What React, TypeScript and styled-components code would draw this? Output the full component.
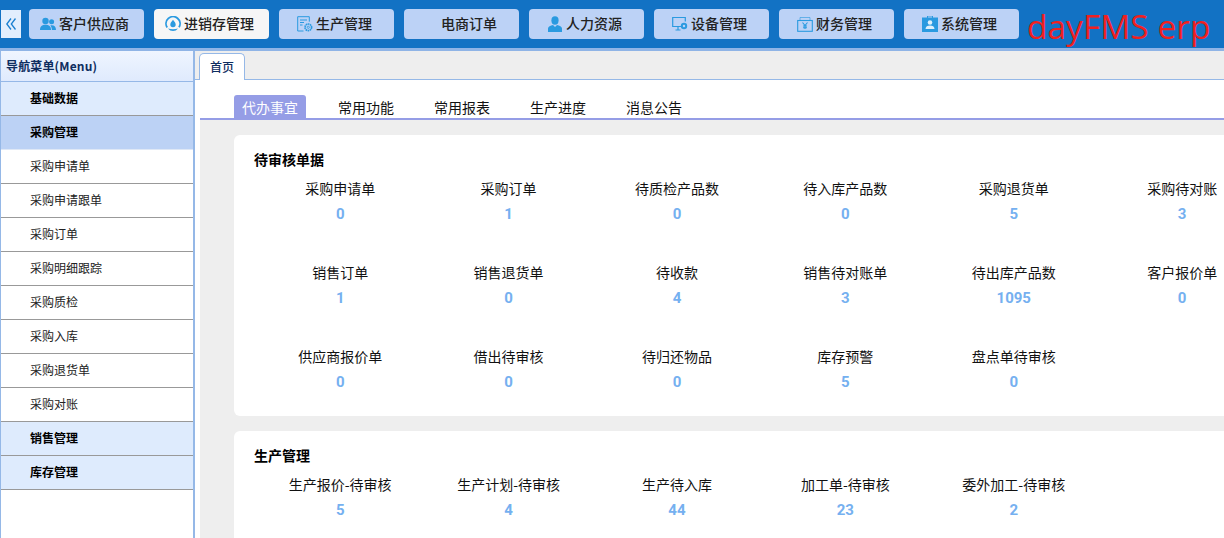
import React from "react";
import styled, { createGlobalStyle } from "styled-components";

const Global = createGlobalStyle`
  html, body { margin: 0; padding: 0; height: 100%; overflow: hidden; background: #fff; }
  body { font-family: "Noto Sans CJK SC", "Liberation Sans", sans-serif; font-size: 14px; color: #000; }
  * { box-sizing: border-box; }
`;

const Page = styled.div`
  width: 1224px;
  height: 538px;
  display: flex;
  flex-direction: column;
  overflow: hidden;
`;
const TopBar = styled.header`
  height: 51px;
  flex: none;
  background: #1272c4;
  border-bottom: 3px solid #8fb4e6;
  display: flex;
  align-items: flex-start;
  padding: 9px 0 0 1px;
`;
const Collapse = styled.div`
  width: 20px;
  height: 28px;
  margin: 1px 8px 0 0;
  background: #e2eefd;
  display: flex;
  align-items: center;
  justify-content: center;
`;
const NavList = styled.nav`
  display: flex;
  gap: 10px;
`;
const NavButton = styled.div<{ $active?: boolean }>`
  width: 115px;
  height: 30px;
  border-radius: 4px;
  background: ${(p) => (p.$active ? "#f6f6f6" : "#bcd2f6")};
  display: flex;
  align-items: center;
  justify-content: center;
  gap: 3px;
  padding-right: 4px;
`;
const NavLabel = styled.span`
  font-size: 14px;
  font-weight: 500;
  color: #222;
  line-height: 28px;
  margin-bottom: 2px;
`;
const IconSlot = styled.span`
  width: 16px;
  height: 16px;
  flex: none;
  display: block;
  svg { display: block; }
`;
const Logo = styled.div`
  margin: -5px 0 0 8px;
  font-family: "Open Sans", sans-serif;
  font-size: 33.5px;
  line-height: 44px;
  color: #f02020;
  white-space: nowrap;
`;

const Body = styled.div`
  flex: 1;
  display: flex;
  min-height: 0;
`;
const Side = styled.aside`
  width: 195px;
  flex: none;
  border-left: 1px solid #95b8e7;
  border-right: 2px solid #95b8e7;
`;
const SideHead = styled.div`
  height: 31px;
  padding-left: 5px;
  font-size: 12px;
  font-weight: 700;
  line-height: 30px;
  letter-spacing: 0.15px;
  color: #0e2d5f;
  background: linear-gradient(#eff5ff, #dfeafd);
  border-bottom: 1px solid #95b8e7;
`;
const SideItem = styled.div<{ $kind: "group" | "open" | "child" }>`
  height: 34px;
  padding-left: 29px;
  font-size: 12px;
  line-height: 31px;
  font-weight: ${(p) => (p.$kind === "child" ? 400 : 700)};
  color: ${(p) => (p.$kind === "child" ? "#222" : "#000")};
  background: ${(p) => (p.$kind === "open" ? "#bcd2f5" : p.$kind === "group" ? "#deebfd" : "#fff")};
  border-bottom: 1px solid ${(p) => (p.$kind === "open" ? "#dfe8f6" : "#999")};
`;

const Main = styled.main`
  flex: 1;
  min-width: 0;
  display: flex;
  flex-direction: column;
  overflow: hidden;
`;
const TabStrip = styled.div`
  height: 29px;
  flex: none;
  background: #eee;
  border-bottom: 1px solid #95b8e7;
  padding: 2px 0 0 4px;
`;
const PageTab = styled.div`
  width: 46px;
  height: 27px;
  background: #fff;
  border: 1px solid #95b8e7;
  border-bottom: 0;
  border-radius: 5px 5px 0 0;
  font-size: 12px;
  line-height: 25px;
  text-align: center;
  font-weight: 500;
  color: #0e2d5f;
`;
const SubTabs = styled.div`
  flex: none;
  height: 40px;
  margin-left: 5px;
  padding: 15px 0 0 34px;
  display: flex;
  gap: 24px;
  border-bottom: 2px solid #959de6;
`;
const SubTab = styled.div<{ $active?: boolean }>`
  width: 72px;
  height: 23px;
  text-align: center;
  font-size: 14px;
  line-height: 25px;
  border-radius: 3px 3px 0 0;
  color: ${(p) => (p.$active ? "#fff" : "#111")};
  background: ${(p) => (p.$active ? "#959de6" : "transparent")};
`;
const Content = styled.div`
  flex: 1;
  min-height: 0;
  margin-left: 5px;
  background: #eee;
  padding: 15px 0 0 34px;
  display: flex;
  flex-direction: column;
  gap: 15px;
  overflow: hidden;
`;
const Card = styled.section`
  flex: none;
  width: 1040px;
  background: #fff;
  border-radius: 6px;
  padding: 15px 0 24px 20px;
`;
const CardTitle = styled.h3`
  margin: 0 0 11px;
  font-size: 14px;
  line-height: 18px;
  font-weight: 700;
  color: #000;
`;
const Stats = styled.div`
  display: grid;
  grid-template-columns: repeat(6, 168.4px);
  grid-auto-rows: 45px;
  row-gap: 39px;
  margin-left: 2px;
`;
const Stat = styled.div`
  text-align: center;
  white-space: nowrap;
`;
const StatLabel = styled.div`
  font-size: 14px;
  line-height: 18px;
  margin-bottom: 7px;
  color: #111;
`;
const StatValue = styled.div`
  font-family: "Roboto", sans-serif;
  font-size: 15px;
  line-height: 20px;
  font-weight: 700;
  color: #75b0f0;
`;

const B = "#2a9ae0";
const Svg: React.FC<{ children: React.ReactNode }> = ({ children }) => (
  <svg width="16" height="16" viewBox="0 0 16 16" fill="none">{children}</svg>
);

const PeopleIcon = () => (
  <Svg>
    <circle cx="5.5" cy="5" r="3.2" fill={B} />
    <path d="M0 14c0-3.6 2-5.2 5.5-5.2S11 10.400 11 14z" fill={B} />
    <circle cx="11.600" cy="5.800" r="2.500" fill={B} />
    <path d="M11.900 14H16c0-3-1.400-4.700-4.400-4.700-.5 0-.9 0-1.300.1 1 1 1.600 2.600 1.600 4.600z" fill={B} />
  </Svg>
);
const DropIcon = () => (
  <Svg>
    <path d="M2.200 11.500A7 7 0 1 1 14 11.300" stroke={B} strokeWidth="1.800" />
    <path d="M3 12.600c1.300 1.700 3 2.500 5 2.500s3.800-.8 5-2.500c-3 1-7 1-10 0z" fill={B} />
    <path d="M8 3.800c1.600 2 2.700 3.300 2.700 4.700a2.700 2.700 0 0 1-5.400 0C5.300 7.100 6.400 5.800 8 3.800z" fill={B} />
  </Svg>
);
const DocGearIcon = () => (
  <Svg>
    <path d="M6.500 15H.7V.7h11.600v5" stroke={B} strokeWidth="1" />
    <path d="M3 4h7M3 6.500h4M3 9h2.500" stroke={B} strokeWidth="1" />
    <circle cx="11.300" cy="11.300" r="3.300" stroke={B} strokeWidth="1.700" strokeDasharray="1.600 .5" />
    <circle cx="11.300" cy="11.300" r="1.100" stroke={B} strokeWidth=".8" />
  </Svg>
);
const PersonIcon = () => (
  <Svg>
    <ellipse cx="8" cy="4.500" rx="3.600" ry="4.200" fill={B} />
    <path d="M1 16v-3.500C1 10.500 3.500 9.500 6 9l2 2 2-2c2.500.5 5 1.500 5 3.500V16z" fill={B} />
  </Svg>
);
const MonitorIcon = () => (
  <Svg>
    <path d="M9.500 10.500H.7V1.500h12.600v4" stroke={B} strokeWidth="1.200" />
    <path d="M6 10.500v3M3.500 14h5" stroke={B} strokeWidth="1.200" />
    <circle cx="12" cy="10" r="3.200" fill={B} />
    <circle cx="12" cy="10" r="1.200" fill="#bcd2f6" />
  </Svg>
);
const CashIcon = () => (
  <Svg>
    <rect x=".7" y="4.500" width="14.600" height="10.800" stroke={B} strokeWidth="1.100" />
    <path d="M3 4.500V1.500h10v3" stroke={B} strokeWidth="1" opacity=".6" />
    <path d="M5.500 6.500 8 9.500l2.500-3M8 9.500V13M6 10h4M6 11.800h4" stroke={B} strokeWidth="1.100" />
  </Svg>
);
const BadgeIcon = () => (
  <Svg>
    <rect y="1.500" width="16" height="14.500" fill={B} />
    <path d="M5.500 2V0h5v2" stroke={B} strokeWidth="1" />
    <circle cx="8" cy="6.500" r="2.300" fill="#dff0fb" />
    <path d="M3.500 13c0-2.500 2-3.500 4.500-3.500s4.500 1 4.500 3.500z" fill="#dff0fb" />
  </Svg>
);

const nav: { label: string; icon?: React.ReactNode; active?: boolean }[] = [
  { label: "客户供应商", icon: <PeopleIcon /> },
  { label: "进销存管理", icon: <DropIcon />, active: true },
  { label: "生产管理", icon: <DocGearIcon /> },
  { label: "电商订单" },
  { label: "人力资源", icon: <PersonIcon /> },
  { label: "设备管理", icon: <MonitorIcon /> },
  { label: "财务管理", icon: <CashIcon /> },
  { label: "系统管理", icon: <BadgeIcon /> },
];

const side: { label: string; kind: "group" | "open" | "child" }[] = [
  { label: "基础数据", kind: "group" },
  { label: "采购管理", kind: "open" },
  { label: "采购申请单", kind: "child" },
  { label: "采购申请跟单", kind: "child" },
  { label: "采购订单", kind: "child" },
  { label: "采购明细跟踪", kind: "child" },
  { label: "采购质检", kind: "child" },
  { label: "采购入库", kind: "child" },
  { label: "采购退货单", kind: "child" },
  { label: "采购对账", kind: "child" },
  { label: "销售管理", kind: "group" },
  { label: "库存管理", kind: "group" },
];

const pending: [string, number][] = [
  ["采购申请单", 0], ["采购订单", 1], ["待质检产品数", 0], ["待入库产品数", 0], ["采购退货单", 5], ["采购待对账", 3],
  ["销售订单", 1], ["销售退货单", 0], ["待收款", 4], ["销售待对账单", 3], ["待出库产品数", 1095], ["客户报价单", 0],
  ["供应商报价单", 0], ["借出待审核", 0], ["待归还物品", 0], ["库存预警", 5], ["盘点单待审核", 0],
];
const production: [string, number][] = [
  ["生产报价-待审核", 5], ["生产计划-待审核", 4], ["生产待入库", 44], ["加工单-待审核", 23], ["委外加工-待审核", 2],
];

const StatGrid: React.FC<{ items: [string, number][] }> = ({ items }) => (
  <Stats>
    {items.map(([label, value]) => (
      <Stat key={label}>
        <StatLabel>{label}</StatLabel>
        <StatValue>{value}</StatValue>
      </Stat>
    ))}
  </Stats>
);

export default function App() {
  return (
    <Page>
      <Global />
      <TopBar>
        <Collapse>
          <svg width="10" height="12" viewBox="0 0 10 12" fill="none" stroke="#1a7fd0" strokeWidth="1.300">
            <path d="M5 .5 .8 6 5 11.500M9.500 .5 5.300 6l4.200 5.500" />
          </svg>
        </Collapse>
        <NavList>
          {nav.map((n) => (
            <NavButton key={n.label} $active={n.active}>
              <IconSlot>{n.icon}</IconSlot>
              <NavLabel>{n.label}</NavLabel>
            </NavButton>
          ))}
        </NavList>
        <Logo>dayFMS erp</Logo>
      </TopBar>
      <Body>
        <Side>
          <SideHead>导航菜单(Menu)</SideHead>
          {side.map((s) => (
            <SideItem key={s.label} $kind={s.kind}>{s.label}</SideItem>
          ))}
        </Side>
        <Main>
          <TabStrip><PageTab>首页</PageTab></TabStrip>
          <SubTabs>
            <SubTab $active>代办事宜</SubTab>
            <SubTab>常用功能</SubTab>
            <SubTab>常用报表</SubTab>
            <SubTab>生产进度</SubTab>
            <SubTab>消息公告</SubTab>
          </SubTabs>
          <Content>
            <Card>
              <CardTitle>待审核单据</CardTitle>
              <StatGrid items={pending} />
            </Card>
            <Card>
              <CardTitle>生产管理</CardTitle>
              <StatGrid items={production} />
            </Card>
          </Content>
        </Main>
      </Body>
    </Page>
  );
}
